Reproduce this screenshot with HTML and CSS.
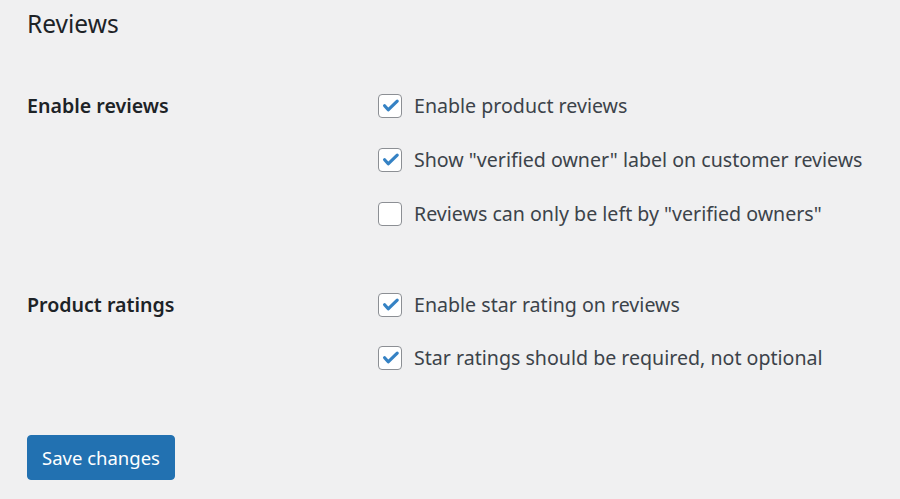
FILE: index.html
```html
<!DOCTYPE html>
<html lang="en">
<head>
<meta charset="utf-8">
<title>Reviews</title>
<link rel="stylesheet" href="styles.css">
</head>
<body>
<div class="wrap">
  <h2 class="title">Reviews</h2>
  <div class="form">
    <div class="section s1">
      <div class="label">Enable reviews</div>
      <div class="options">
        <label class="opt"><span class="cb checked"><svg viewBox="0 0 24 24" width="24" height="24"><path d="M6.6 11.8l3.6 4 9-8.6" fill="none" stroke="#3582c4" stroke-width="3.2" stroke-linecap="round" stroke-linejoin="round"/></svg></span><span class="txt">Enable product reviews</span></label>
        <label class="opt"><span class="cb checked"><svg viewBox="0 0 24 24" width="24" height="24"><path d="M6.6 11.8l3.6 4 9-8.6" fill="none" stroke="#3582c4" stroke-width="3.2" stroke-linecap="round" stroke-linejoin="round"/></svg></span><span class="txt">Show "verified owner" label on customer reviews</span></label>
        <label class="opt"><span class="cb"></span><span class="txt">Reviews can only be left by "verified owners"</span></label>
      </div>
    </div>
    <div class="section s2">
      <div class="label">Product ratings</div>
      <div class="options tight">
        <label class="opt"><span class="cb checked"><svg viewBox="0 0 24 24" width="24" height="24"><path d="M6.6 11.8l3.6 4 9-8.6" fill="none" stroke="#3582c4" stroke-width="3.2" stroke-linecap="round" stroke-linejoin="round"/></svg></span><span class="txt">Enable star rating on reviews</span></label>
        <label class="opt"><span class="cb checked"><svg viewBox="0 0 24 24" width="24" height="24"><path d="M6.6 11.8l3.6 4 9-8.6" fill="none" stroke="#3582c4" stroke-width="3.2" stroke-linecap="round" stroke-linejoin="round"/></svg></span><span class="txt">Star ratings should be required, not optional</span></label>
      </div>
    </div>
  </div>
  <button class="btn" type="button">Save changes</button>
</div>
</body>
</html>
```

FILE: styles.css
```css
html, body {
  margin: 0;
  padding: 0;
  background: #f0f0f1;
}
body {
  font-family: "Noto Sans", "Open Sans", "DejaVu Sans", sans-serif;
  color: #3c434a;
  font-size: 19.6px;
}
.wrap {
  padding: 9px 0 0 27px;
}
.title {
  margin: 0;
  font-size: 24.5px;
  line-height: 30px;
  font-weight: 400;
  color: #1d2327;
}
.form {
  margin-top: 55px;
}
.section {
  display: flex;
}
.s2 {
  margin-top: 67px;
}
.label {
  width: 351px;
  flex: none;
  font-weight: 600;
  color: #1d2327;
  line-height: 24px;
}
.options {
  display: flex;
  flex-direction: column;
  gap: 30px;
}
.options.tight {
  gap: 29px;
}
.opt {
  display: flex;
  align-items: center;
  height: 24px;
  line-height: 24px;
}
.cb {
  width: 24px;
  height: 24px;
  box-sizing: border-box;
  border: 1px solid #8c8f94;
  border-radius: 4px;
  background: #fff;
  flex: none;
  margin-right: 12px;
  position: relative;
}
.cb svg {
  display: block;
  position: absolute;
  left: -1px;
  top: -1px;
}
.txt {
  white-space: nowrap;
}
.btn {
  display: block;
  margin-top: 65px;
  width: 148px;
  height: 45px;
  padding: 0;
  border: 1px solid #2271b1;
  border-radius: 4px;
  background: #2271b1;
  color: #fff;
  font-family: inherit;
  font-size: 18.5px;
  cursor: pointer;
}
```
